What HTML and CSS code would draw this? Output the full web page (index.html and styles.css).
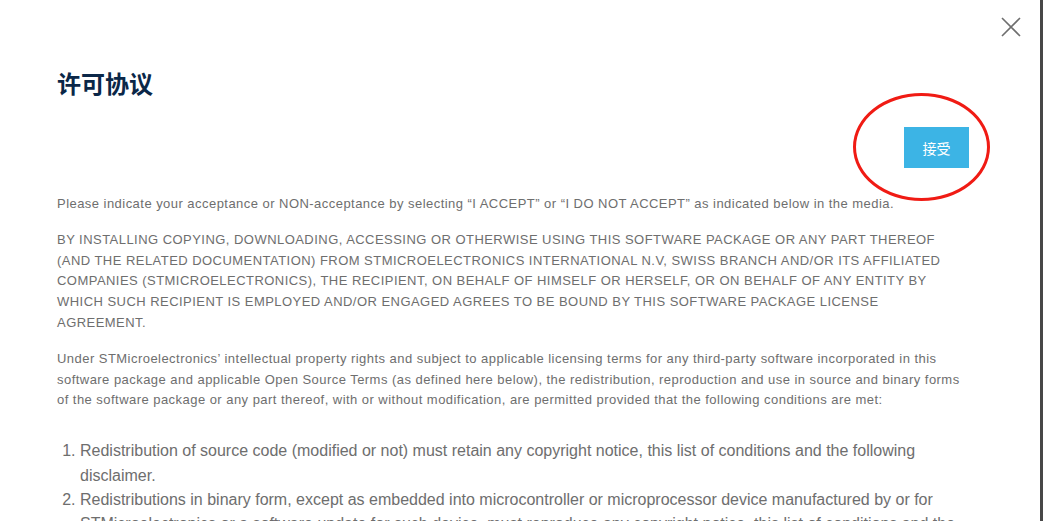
FILE: index.html
```html
<!DOCTYPE html>
<html lang="zh">
<head>
<meta charset="utf-8">
<title>许可协议</title>
<link rel="stylesheet" href="styles.css">
</head>
<body>
<div class="page">
  <div class="modal">
    <button class="close" aria-label="关闭">
      <svg width="20" height="20" viewBox="0 0 20 20"><path d="M1 1 L19 19 M19 1 L1 19" stroke="#6e6e6e" stroke-width="1.6" fill="none"/></svg>
    </button>
    <h1 class="title">许可协议</h1>
    <div class="actions">
      <div class="accept-wrap">
        <button class="accept">接受</button>
        <span class="mark"></span>
      </div>
    </div>
    <div class="content">
      <p>Please indicate your acceptance or NON-acceptance by selecting “I ACCEPT” or “I DO NOT ACCEPT” as indicated below in the media.</p>
      <p>BY INSTALLING COPYING, DOWNLOADING, ACCESSING OR OTHERWISE USING THIS SOFTWARE PACKAGE OR ANY PART THEREOF (AND THE RELATED DOCUMENTATION) FROM STMICROELECTRONICS INTERNATIONAL N.V, SWISS BRANCH AND/OR ITS AFFILIATED COMPANIES (STMICROELECTRONICS), THE RECIPIENT, ON BEHALF OF HIMSELF OR HERSELF, OR ON BEHALF OF ANY ENTITY BY WHICH SUCH RECIPIENT IS EMPLOYED AND/OR ENGAGED AGREES TO BE BOUND BY THIS SOFTWARE PACKAGE LICENSE AGREEMENT.</p>
      <p>Under STMicroelectronics’ intellectual property rights and subject to applicable licensing terms for any third-party software incorporated in this software package and applicable Open Source Terms (as defined here below), the redistribution, reproduction and use in source and binary forms of the software package or any part thereof, with or without modification, are permitted provided that the following conditions are met:</p>
      <ol class="conditions">
        <li>Redistribution of source code (modified or not) must retain any copyright notice, this list of conditions and the following disclaimer.</li>
        <li>Redistributions in binary form, except as embedded into microcontroller or microprocessor device manufactured by or for STMicroelectronics or a software update for such device, must reproduce any copyright notice, this list of conditions and the following disclaimer in the documentation.</li>
      </ol>
    </div>
  </div>
  <div class="edge"></div>
</div>
</body>
</html>
```

FILE: styles.css
```css
html, body {
  margin: 0;
  padding: 0;
  height: 100%;
  overflow: hidden;
}
body {
  font-family: Arial, "Liberation Sans", "Noto Sans CJK SC", sans-serif;
  background: #ffffff;
}
.page {
  display: flex;
  height: 521px;
}
.modal {
  position: relative;
  flex: 0 0 1040px;
  box-sizing: border-box;
  padding: 70px 71px 0 57px;
  background: #ffffff;
  overflow: hidden;
}
.edge {
  flex: 1;
  background: #474747;
}
.close {
  position: absolute;
  top: 17px;
  right: 19px;
  width: 20px;
  height: 20px;
  padding: 0;
  border: 0;
  background: none;
  cursor: pointer;
}
.close svg { display: block; }
.title {
  margin: 0;
  font-family: "Liberation Sans", "Noto Sans CJK SC", sans-serif;
  font-size: 24px;
  line-height: 30px;
  font-weight: 700;
  color: #0b2748;
}
.actions {
  display: flex;
  justify-content: flex-end;
  margin-top: 27px;
}
.accept-wrap {
  position: relative;
}
.accept {
  display: block;
  width: 65px;
  height: 41px;
  border: 0;
  padding: 0;
  background: #3cb4e5;
  color: #ffffff;
  font-family: "Liberation Sans", "Noto Sans CJK SC", sans-serif;
  font-size: 14px;
  cursor: pointer;
}
.mark {
  position: absolute;
  left: -51px;
  top: -34px;
  width: 131px;
  height: 102px;
  border: 3px solid #f01b14;
  border-radius: 50%;
  pointer-events: none;
}
.content {
  margin-top: 26px;
  color: #6e6e6e;
}
.content p {
  margin: 0 0 15px;
  font-size: 13px;
  line-height: 20.8px;
  letter-spacing: 0.46px;
}
.conditions {
  margin: 28px 0 0;
  padding-left: 23px;
  font-size: 16px;
  line-height: 24.4px;
}
```
